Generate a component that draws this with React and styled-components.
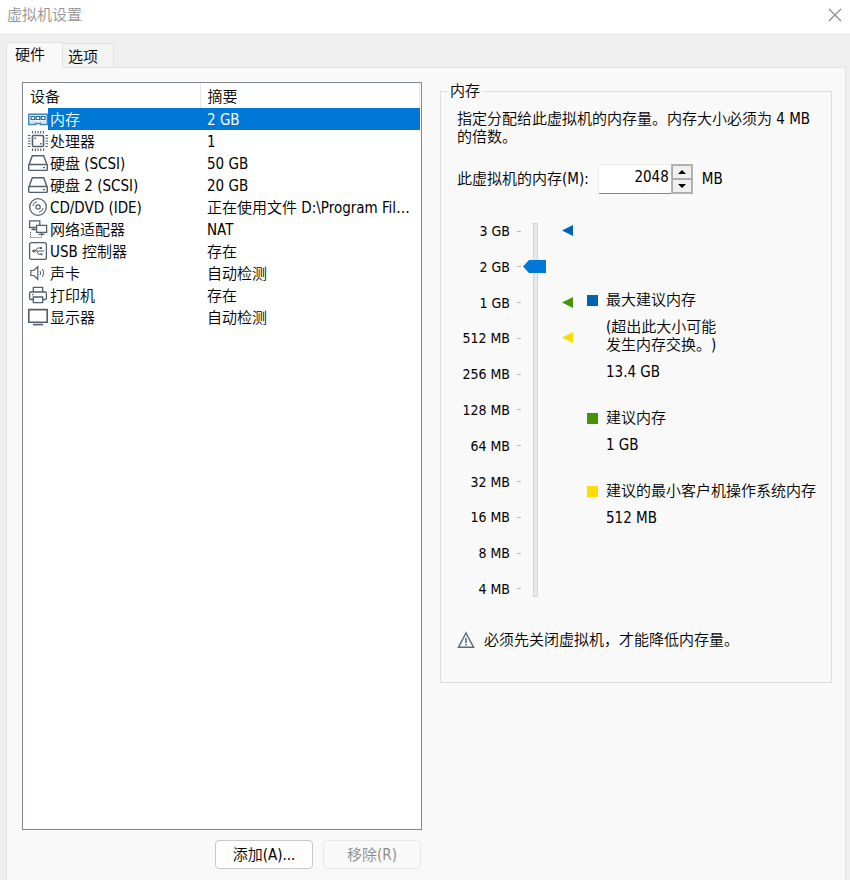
import React, { useState } from 'react';
import styled, { createGlobalStyle, css } from 'styled-components';

const GlobalStyle = createGlobalStyle`
    * {
        box-sizing: border-box;
    }

    body {
        margin: 0;
        background: #efefef;
        text-spacing-trim: space-all;
    }

    body, button, input {
        font-family: 'DejaVu Sans Condensed', 'Noto Sans CJK SC', sans-serif;
        font-size: 15px;
        font-weight: 350;
        line-height: 18px;
        color: #000;
    }
`

const MemoryIcon = () => (
    <Icon viewBox="0 0 20 20">
        <path d="M0.7 5.2h18.6v10.3h-6.8v-1h-5v1H0.7z" fill="#e9f1f7" stroke="#3f82b8" strokeWidth="1.4"/>
        <path d="M3 7.5h3.6v3H3zM8.2 7.5h3.6v3H8.2zM13.4 7.5H17v3h-3.6z" fill="#fff" stroke="#2b6ca3" strokeWidth="1.2"/>
        <path d="M2 13h6M12 13h6" stroke="#8fb6d4" strokeDasharray="1 1"/>
    </Icon>
)

const CpuIcon = () => (
    <Icon viewBox="0 0 20 20">
        <rect x="4.5" y="4.5" width="11" height="11" rx="1" fill="#fff" stroke="#4f5f6d" strokeWidth="1.6"/>
        <path d="M4.5 0v2.5M7.3 0v2.5M10 0v2.5M12.7 0v2.5M15.5 0v2.5M4.5 17.5v2.5M7.3 17.5v2.5M10 17.5v2.5M12.7 17.5v2.5M15.5 17.5v2.5" stroke="#4f5f6d" strokeWidth="1.1"/>
        <path d="M0 4.5h2.5M0 7.3h2.5M0 10h2.5M0 12.7h2.5M0 15.5h2.5M17.5 4.5H20M17.5 7.3H20M17.5 10H20M17.5 12.7H20M17.5 15.5H20" stroke="#4f5f6d" strokeWidth="1.1"/>
        <path d="M6.5 6.5H8V8H6.5zM12 12h1.5v1.5H12z" fill="#4f5f6d"/>
    </Icon>
)

const DiskIcon = () => (
    <Icon viewBox="0 0 20 20">
        <path d="M0.9 12L4.3 2.8h11.4L19.1 12" fill="#fff" stroke="#4f5f6d" strokeWidth="1.4"/>
        <rect x="0.7" y="11.5" width="18.6" height="5.9" rx="1" fill="#fff" stroke="#4f5f6d" strokeWidth="1.4"/>
        <path d="M15 14h2v1.2h-2z" fill="#4f5f6d"/>
    </Icon>
)

const DiscIcon = () => (
    <Icon viewBox="0 0 20 20" fill="none" stroke="#4f5f6d">
        <circle cx="10" cy="10" r="8.3" strokeWidth="1.3"/>
        <circle cx="10" cy="10" r="2.2" strokeWidth="1.2"/>
        <path d="M4.8 9A5.3 5.3 0 0 1 9 4.8M15.2 11A5.3 5.3 0 0 1 11 15.2"/>
    </Icon>
)

const NetworkIcon = () => (
    <Icon viewBox="0 0 20 20" fill="none" stroke="#4f5f6d">
        <path d="M8 8.5H1.6V1.9h10.2V6M3.5 10.6h4.5M5.5 8.5v2" strokeWidth="1.3"/>
        <path d="M8.6 6.3h10v7h-10z" fill="#fff" strokeWidth="1.3"/>
        <path d="M10.5 15.4h6M13.6 13.3v2" strokeWidth="1.3"/>
        <path d="M2.5 13v6M2.5 18.5h11v-2" strokeDasharray="1 1"/>
    </Icon>
)

const UsbIcon = () => (
    <Icon viewBox="0 0 20 20" fill="none" stroke="#4f5f6d">
        <rect x="1.6" y="1.6" width="16.8" height="16.8" rx="2" strokeWidth="1.3"/>
        <path d="M5 10h11M7 10l2.5-3h3M8.5 10l2.2 3.3h2"/>
        <path d="M3.5 10L6.5 8v4zM12 6h2v2h-2zM12.5 12.3h2v2h-2z" fill="#4f5f6d" stroke="none"/>
    </Icon>
)

const SoundIcon = () => (
    <Icon viewBox="0 0 20 20" fill="none" stroke="#4f5f6d">
        <path d="M2.8 7.5h3l4-3.8v12.6l-4-3.8h-3z" strokeWidth="1.2"/>
        <path d="M12 8c.8 1.2.8 2.8 0 4M14.2 6c1.8 2.4 1.8 5.6 0 8"/>
    </Icon>
)

const PrinterIcon = () => (
    <Icon viewBox="0 0 20 20" fill="none" stroke="#4f5f6d" strokeWidth="1.3">
        <path d="M5.3 7V2.3h9.4V7M5 14.5H2.8q-1.2 0-1.2-1.2V8.2q0-1.2 1.2-1.2h14.4q1.2 0 1.2 1.2v5.1q0 1.2-1.2 1.2H15"/>
        <path d="M5.3 12h9.4v5.7H5.3zM4 9.7h1.5"/>
    </Icon>
)

const DisplayIcon = () => (
    <Icon viewBox="0 0 20 20" fill="none" stroke="#4f5f6d" strokeWidth="1.6">
        <path d="M0.8 2.6h18.4v12.6H0.8z"/>
        <path d="M5 17.6h10"/>
    </Icon>
)

const devices = [
    { name: '内存', summary: '2 GB', icon: MemoryIcon },
    { name: '处理器', summary: '1', icon: CpuIcon },
    { name: '硬盘 (SCSI)', summary: '50 GB', icon: DiskIcon },
    { name: '硬盘 2 (SCSI)', summary: '20 GB', icon: DiskIcon },
    { name: 'CD/DVD (IDE)', summary: '正在使用文件 D:\\Program Files (x86)', icon: DiscIcon },
    { name: '网络适配器', summary: 'NAT', icon: NetworkIcon },
    { name: 'USB 控制器', summary: '存在', icon: UsbIcon },
    { name: '声卡', summary: '自动检测', icon: SoundIcon },
    { name: '打印机', summary: '存在', icon: PrinterIcon },
    { name: '显示器', summary: '自动检测', icon: DisplayIcon }
]

const BLUE = '#0063b1';
const GREEN = '#46930a';
const YELLOW = '#ffdb00';

const levels = [
    { label: '3 GB', size: 3072, marker: BLUE },
    { label: '2 GB', size: 2048 },
    { label: '1 GB', size: 1024, marker: GREEN },
    { label: '512 MB', size: 512, marker: YELLOW },
    { label: '256 MB', size: 256 },
    { label: '128 MB', size: 128 },
    { label: '64 MB', size: 64 },
    { label: '32 MB', size: 32 },
    { label: '16 MB', size: 16 },
    { label: '8 MB', size: 8 },
    { label: '4 MB', size: 4 }
]

// position on the scale, counted from the bottom
const toLevel = (size) => {
    const index = levels.findIndex((level) => level.size <= size);
    return index < 0 ? 0 : levels.length - 1 - index;
}

const MemoryPanel = () => {
    const [memory, setMemory] = useState(2048);
    const step = (by) => setMemory(Math.min(3072, Math.max(4, Number(memory) + by)));

    return (
        <Group>
            <legend>内存</legend>
            <p>指定分配给此虚拟机的内存量。内存大小必须为 4 MB 的倍数。</p>
            <MemoryRow>
                <label htmlFor="memory">此虚拟机的内存(M):</label>
                <Spinner>
                    <input id="memory" value={memory} onChange={(e) => setMemory(e.target.value)}/>
                    <SpinnerButtons>
                        <button type="button" aria-label="增加" onClick={() => step(4)}>
                            <svg width="8" height="4" viewBox="0 0 8 4"><path d="M0 4L4 0L8 4z"/></svg>
                        </button>
                        <button type="button" aria-label="减少" onClick={() => step(-4)}>
                            <svg width="8" height="4" viewBox="0 0 8 4"><path d="M0 0L4 4L8 0z"/></svg>
                        </button>
                    </SpinnerButtons>
                </Spinner>
                <span>MB</span>
            </MemoryRow>
            <Scale>
                <Labels>
                    {levels.map((level) => <li key={level.size}>{level.label}</li>)}
                </Labels>
                <Slider
                    type="range"
                    aria-label="内存"
                    min="0"
                    max={levels.length - 1}
                    value={toLevel(memory)}
                    onChange={(e) => setMemory(levels[levels.length - 1 - e.target.value].size)}
                />
                <Markers>
                    {levels.map((level) => (
                        <li key={level.size}>
                            {level.marker && (
                                <svg width="11" height="11" viewBox="0 0 11 11">
                                    <path d="M0 5.5L11 0V11z" fill={level.marker}/>
                                </svg>
                            )}
                        </li>
                    ))}
                </Markers>
                <Hints>
                    <Hint $color={BLUE}>
                        <dt>最大建议内存</dt>
                        <dd>(超出此大小可能<br/>发生内存交换。)</dd>
                        <dd>13.4 GB</dd>
                    </Hint>
                    <Hint $color={GREEN}>
                        <dt>建议内存</dt>
                        <dd>1 GB</dd>
                    </Hint>
                    <Hint $color={YELLOW}>
                        <dt>建议的最小客户机操作系统内存</dt>
                        <dd>512 MB</dd>
                    </Hint>
                </Hints>
            </Scale>
            <Warning>
                <svg width="18" height="18" viewBox="0 0 18 18" fill="none" stroke="#5b6b79">
                    <path d="M9 2L16.6 16.3H1.4z" strokeWidth="1.4"/>
                    <path d="M9 7v5M9 13v1.5" strokeWidth="1.6"/>
                </svg>
                <span>必须先关闭虚拟机，才能降低内存量。</span>
            </Warning>
        </Group>
    )
}

const App = () => {
    const [tab, setTab] = useState(0);
    const [selected, setSelected] = useState(0);

    return (
        <Window>
            <GlobalStyle/>
            <TitleBar>
                <h1>虚拟机设置</h1>
                <button type="button" aria-label="关闭">
                    <svg width="14" height="14" viewBox="0 0 14 14"><path d="M1 1L13 13M13 1L1 13" stroke="#8c8c8c" strokeWidth="1.2"/></svg>
                </button>
            </TitleBar>
            <Tabs role="tablist">
                {['硬件', '选项'].map((name, i) => (
                    <Tab key={name} role="tab" type="button" aria-selected={tab === i} $active={tab === i} onClick={() => setTab(i)}>
                        {name}
                    </Tab>
                ))}
            </Tabs>
            <Page>
                <Hardware>
                    <ListBox>
                        <DeviceTable>
                            <colgroup>
                                <col className="icon"/>
                                <col className="name"/>
                                <col/>
                            </colgroup>
                            <thead>
                                <tr>
                                    <th colSpan="2">设备</th>
                                    <th>摘要</th>
                                </tr>
                            </thead>
                            <tbody>
                                {devices.map(({ name, summary, icon: DeviceIcon }, i) => (
                                    <DeviceRow key={name} $selected={selected === i} onClick={() => setSelected(i)}>
                                        <td><DeviceIcon/></td>
                                        <td>{name}</td>
                                        <td>{summary}</td>
                                    </DeviceRow>
                                ))}
                            </tbody>
                        </DeviceTable>
                    </ListBox>
                    <Buttons>
                        <Button type="button">添加(A)...</Button>
                        <Button type="button" disabled>移除(R)</Button>
                    </Buttons>
                </Hardware>
                <MemoryPanel/>
            </Page>
        </Window>
    )
}

const Window = styled.div`
    min-height: 100vh;
    display: flex;
    flex-direction: column;
`

const TitleBar = styled.header`
    height: 33px;
    padding: 0 8px 4px 7px;
    display: flex;
    align-items: center;
    justify-content: space-between;
    background: #fff;

    h1 {
        margin: 0;
        font-size: 15px;
        font-weight: 350;
        color: #949494;
    }

    button {
        display: flex;
        padding: 0;
        border: none;
        background: none;
    }
`

const Tabs = styled.div`
    display: flex;
    align-items: flex-end;
    height: 34px;
    padding-left: 6px;
`

const Tab = styled.button`
    height: 24px;
    padding: 2px 15px 0 5px;
    border: 1px solid #e3e3e3;
    border-left: none;
    border-bottom: none;
    background: #f3f3f3;
    text-align: left;

    ${({ $active }) => $active && css`
        height: 26px;
        padding: 0 17px 2px 8px;
        margin-bottom: -1px;
        border-left: 1px solid #e3e3e3;
        background: #f9f9f9;
        z-index: 1;
    `}
`

const Page = styled.main`
    flex: 1;
    display: grid;
    grid-template-columns: 400fr 392fr;
    gap: 18px;
    margin: 0 4px 0 6px;
    padding: 14px 13px 11px 15px;
    border: 1px solid #e3e3e3;
    border-bottom: none;
    background: #f9f9f9;
`

const Hardware = styled.section`
    display: flex;
    flex-direction: column;
    gap: 10px;
    min-width: 0;
`

const ListBox = styled.div`
    flex: 1;
    padding-right: 1px;
    border: 1px solid #828790;
    background: #fff;
`

const DeviceTable = styled.table`
    width: 100%;
    table-layout: fixed;
    border-collapse: collapse;

    .icon {
        width: 25px;
    }

    .name {
        width: 152px;
    }

    th {
        height: 25px;
        padding: 2px 7px 0;
        border-right: 1px solid #e5e5e5;
        font-weight: 350;
        text-align: left;
    }
`

const DeviceRow = styled.tr`
    td {
        height: 22px;
        padding: 2px 6px 0 7px;
        white-space: nowrap;
        overflow: hidden;
        text-overflow: ellipsis;
    }

    td:nth-child(1) {
        padding: 0 0 0 5px;
    }

    td:nth-child(2) {
        padding: 2px 0 0 2px;
    }

    ${({ $selected }) => $selected && css`
        td + td {
            background: #0078d7;
            color: #fff;
        }
    `}
`

const Icon = styled.svg`
    display: block;
    width: 20px;
    height: 20px;
`

const Buttons = styled.div`
    display: flex;
    justify-content: flex-end;
    gap: 10px;
    padding-right: 1px;
`

const Button = styled.button`
    width: 98px;
    height: 29px;
    padding: 0;
    border: 1px solid #c8c8c8;
    border-radius: 4px;
    background: #fdfdfd;

    &:disabled {
        border-color: #e8e8e8;
        background: #f9f9f9;
        color: #8c8c8c;
    }
`

const Group = styled.fieldset`
    align-self: start;
    min-width: 0;
    margin: 0;
    padding: 10px 14px 33px 16px;
    border: 1px solid #dcdcdc;

    legend {
        margin-left: -10px;
        padding: 0 3px;
    }

    p {
        margin: 0;
    }
`

const MemoryRow = styled.div`
    display: flex;
    align-items: center;
    gap: 9px;
    margin-top: 18px;
`

const Spinner = styled.div`
    display: flex;
    width: 95px;
    height: 30px;

    input {
        flex: 1;
        min-width: 0;
        padding: 0 2px 4px;
        border: 1px solid #ececec;
        border-right: none;
        border-bottom-color: #868686;
        border-radius: 2px 0 0 2px;
        background: #fff;
        text-align: right;
        outline: none;
    }
`

const SpinnerButtons = styled.div`
    display: flex;
    flex-direction: column;
    width: 22px;
    border: 1px solid #b4b4ba;

    button {
        flex: 1;
        display: flex;
        align-items: center;
        justify-content: center;
        padding: 0;
        border: 1px solid #acacac;
        background: #f0f0f0;
    }
`

const Scale = styled.div`
    display: flex;
    height: 374px;
    margin-top: 29px;
`

const Labels = styled.ul`
    display: flex;
    flex-direction: column;
    justify-content: space-between;
    width: 64px;
    margin: 0;
    padding: 0;
    list-style: none;
    font-size: 14px;
    line-height: 16px;

    li {
        display: flex;
        align-items: center;
        justify-content: flex-end;
        gap: 7px;
    }

    li::after {
        content: '';
        width: 4px;
        height: 1px;
        background: #b8b8b8;
    }
`

const Slider = styled.input`
    appearance: none;
    writing-mode: vertical-lr;
    direction: rtl;
    width: 25px;
    height: 374px;
    margin: 0 0 0 2px;
    background: none;

    &::-webkit-slider-runnable-track {
        width: 5px;
        border: 1px solid #d6d6d6;
        background: #e7eaea;
    }

    &::-webkit-slider-thumb {
        appearance: none;
        width: 23px;
        height: 13px;
        margin-left: -11px;
        background: #0078d7;
        clip-path: polygon(0 50%, 6px 0, 100% 0, 100% 100%, 6px 100%);
    }
`

const Markers = styled.ul`
    display: flex;
    flex-direction: column;
    justify-content: space-between;
    margin: 0 13px 0 14px;
    padding: 0;
    list-style: none;

    li {
        display: flex;
        align-items: flex-start;
        width: 12px;
        height: 16px;
        padding-top: 2px;
    }
`

const Hints = styled.div`
    display: flex;
    flex-direction: column;
    gap: 28px;
    padding-top: 68px;
`

const Hint = styled.dl`
    display: flex;
    flex-direction: column;
    gap: 9px;
    margin: 0;
    white-space: nowrap;

    dt {
        display: flex;
        align-items: center;
        gap: 8px;
    }

    dt::before {
        content: '';
        width: 11px;
        height: 11px;
        background: ${({ $color }) => $color};
    }

    dd {
        margin: 0 0 0 19px;
    }
`

const Warning = styled.div`
    display: flex;
    align-items: center;
    gap: 9px;
    margin-top: 34px;
`

export default App;
